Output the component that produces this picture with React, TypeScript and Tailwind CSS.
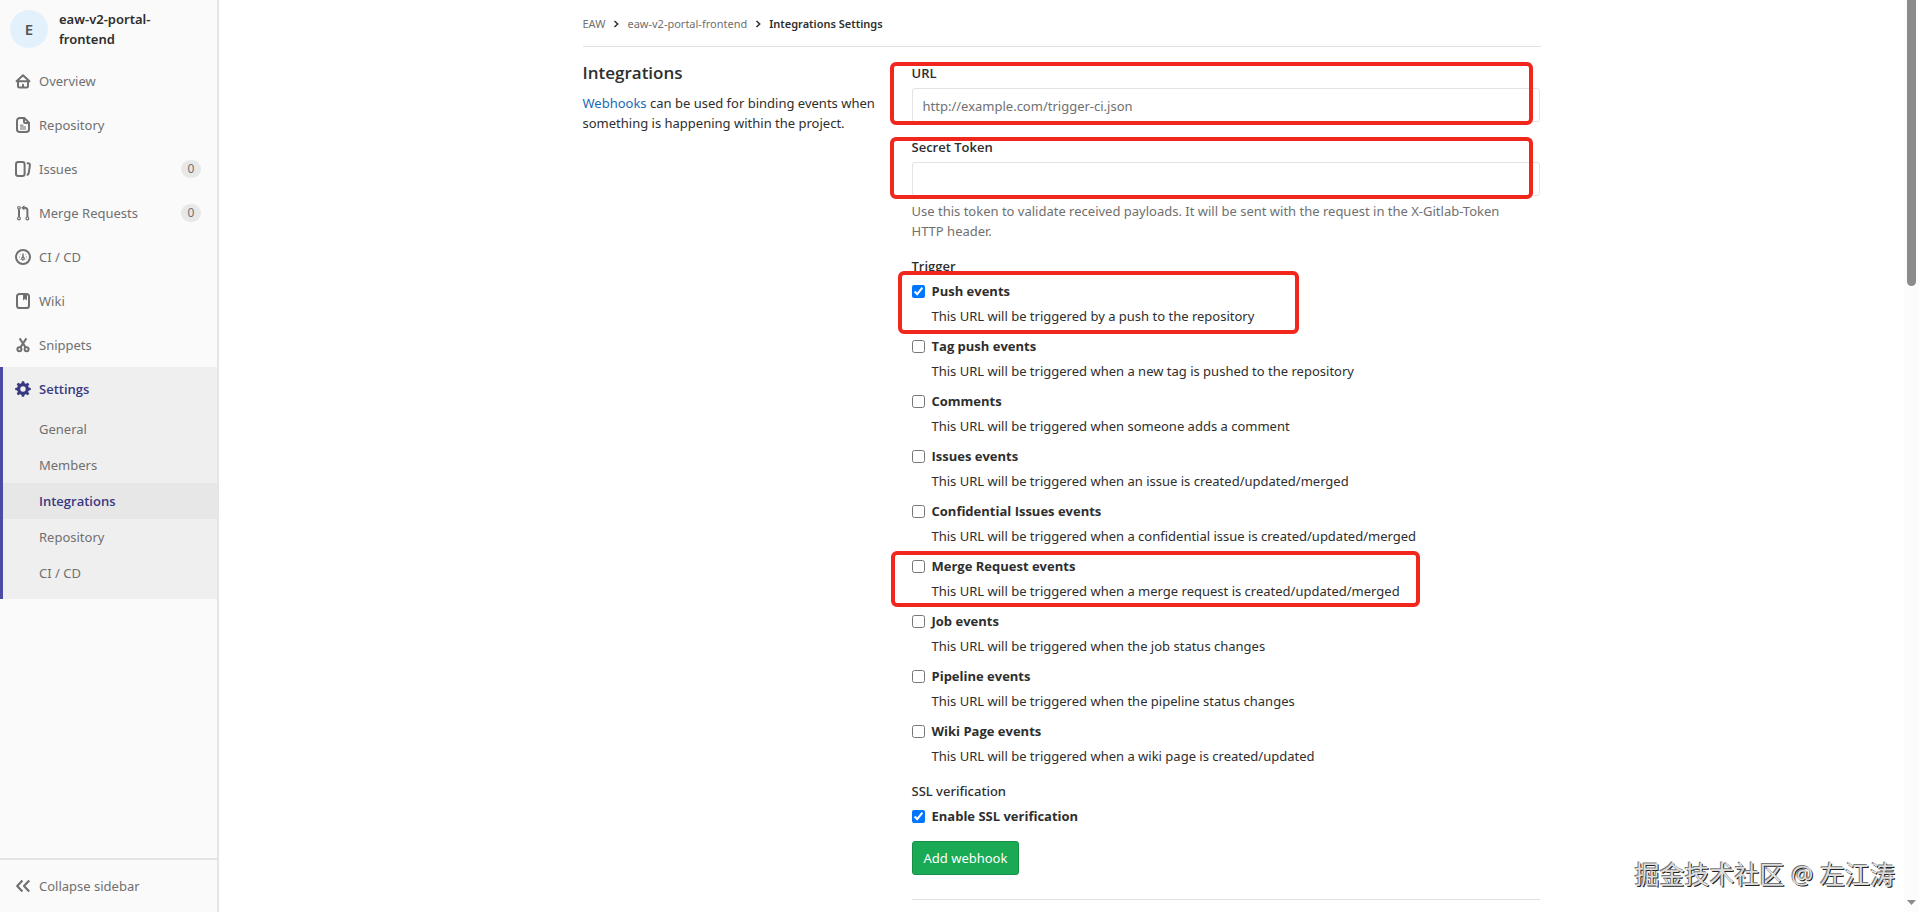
import type { ReactNode } from "react";
import clsx from "clsx";

// ─── Data ───────────────────────────────────────────────────────────────────

const NAV_ITEMS = [
  { label: "Overview", icon: "home" },
  { label: "Repository", icon: "doc" },
  { label: "Issues", icon: "issues", count: 0 },
  { label: "Merge Requests", icon: "merge", count: 0 },
  { label: "CI / CD", icon: "gauge" },
  { label: "Wiki", icon: "book" },
  { label: "Snippets", icon: "scissors" },
];

const SETTINGS_ITEMS = ["General", "Members", "Integrations", "Repository", "CI / CD"];

const TRIGGERS = [
  {
    id: "push_events",
    label: "Push events",
    help: "This URL will be triggered by a push to the repository",
    checked: true,
    mark: "-left-[14px] -top-[10px] -bottom-[8px] w-[401px]",
  },
  {
    id: "tag_push_events",
    label: "Tag push events",
    help: "This URL will be triggered when a new tag is pushed to the repository",
  },
  {
    id: "note_events",
    label: "Comments",
    help: "This URL will be triggered when someone adds a comment",
  },
  {
    id: "issues_events",
    label: "Issues events",
    help: "This URL will be triggered when an issue is created/updated/merged",
  },
  {
    id: "confidential_issues_events",
    label: "Confidential Issues events",
    help: "This URL will be triggered when a confidential issue is created/updated/merged",
  },
  {
    id: "merge_requests_events",
    label: "Merge Request events",
    help: "This URL will be triggered when a merge request is created/updated/merged",
    mark: "-left-[21px] -top-[5px] -bottom-[6px] w-[529px]",
  },
  {
    id: "job_events",
    label: "Job events",
    help: "This URL will be triggered when the job status changes",
  },
  {
    id: "pipeline_events",
    label: "Pipeline events",
    help: "This URL will be triggered when the pipeline status changes",
  },
  {
    id: "wiki_page_events",
    label: "Wiki Page events",
    help: "This URL will be triggered when a wiki page is created/updated",
  },
];

// ─── Icons ──────────────────────────────────────────────────────────────────

const ICONS: Record<string, ReactNode> = {
  home: (
    <>
      <path d="M8 2.2 14.4 8.2H1.6z" />
      <path d="M3 8.4v4.8c0 .8.5 1.3 1.3 1.3h7.4c.8 0 1.3-.5 1.3-1.3V8.4" />
      <path d="M7 14v-2.2a1 1 0 0 1 2 0V14z" fill="currentColor" stroke="none" />
    </>
  ),
  doc: (
    <>
      <path d="M9.3 1H4.8A2.8 2.8 0 0 0 2 3.8v8.4A2.8 2.8 0 0 0 4.8 15h6.4a2.8 2.8 0 0 0 2.8-2.8V5.6z" />
      <path d="M9 1.2v3.2c0 .9.6 1.5 1.5 1.5H14" />
      <path d="M5 8.2h3.4M5 10h6M5 12h6" strokeWidth="1" />
    </>
  ),
  issues: (
    <>
      <rect x="1" y="1" width="8.6" height="14" rx="2.2" />
      <path d="M11.8 2.2h1.3c1.2 0 2 .9 1.8 2.1l-1.2 8c-.2 1-.8 1.6-1.9 1.6" />
    </>
  ),
  merge: (
    <>
      <circle cx="4" cy="2.8" r="1.3" strokeWidth="1.2" />
      <circle cx="4" cy="13.4" r="1.4" strokeWidth="1.2" />
      <circle cx="12.4" cy="13.4" r="1.4" strokeWidth="1.2" />
      <path d="M4 4.2V12M12.4 12V5.4c0-1.7-.9-2.6-2.6-2.6H8.6" />
      <path d="M9.4.2v5.2L6.2 2.8z" fill="currentColor" stroke="none" />
    </>
  ),
  gauge: (
    <>
      <circle cx="8" cy="8" r="7" />
      <path d="M8 4.4 8.8 8.6H7.2z" fill="currentColor" strokeWidth=".6" />
      <circle cx="8" cy="9.6" r="1.3" strokeWidth="1.2" />
      <path
        d="M4 8h.8M11.2 8h.8M5 5.2l.5.5M11 5.2l-.5.5M5 10.8l.5-.5M11 10.8l-.5-.5"
        strokeWidth="1"
      />
    </>
  ),
  book: (
    <>
      <rect x="2" y="1" width="12" height="14" rx="2.6" />
      <path d="M8 1h4v6.4L10 6 8 7.4z" fill="currentColor" stroke="none" />
    </>
  ),
  scissors: (
    <>
      <circle cx="4.4" cy="12.2" r="2" />
      <circle cx="11.6" cy="12.2" r="2" />
      <path d="M4.6 1.4 10.6 10.4M11.4 1.4 5.4 10.4" />
    </>
  ),
  collapse: <path d="M7.4 2.6 2.2 8l5.2 5.4M14.2 2.6 9 8l5.2 5.4" strokeWidth="2.2" />,
};

function Icon({ name }: { name: string }) {
  return (
    <svg
      viewBox="0 0 16 16"
      className="size-4 shrink-0"
      fill="none"
      stroke="currentColor"
      strokeWidth="2"
      strokeLinejoin="round"
      aria-hidden="true"
    >
      {ICONS[name]}
    </svg>
  );
}

function GearIcon() {
  return (
    <svg viewBox="0 0 16 16" className="size-4 shrink-0" aria-hidden="true">
      <circle cx="8" cy="8" r="4.3" fill="none" stroke="currentColor" strokeWidth="3.2" />
      {[0, 45, 90, 135, 180, 225, 270, 315].map((angle) => (
        <path
          key={angle}
          d="M6.2 3 6.9.2h2.2L9.8 3z"
          fill="currentColor"
          transform={`rotate(${angle} 8 8)`}
        />
      ))}
    </svg>
  );
}

// ─── Sidebar ────────────────────────────────────────────────────────────────

function Sidebar() {
  return (
    <aside className="flex w-[219px] shrink-0 flex-col border-r-2 border-[#e5e5e5] bg-[#fafafa] text-[#707070]">
      <a href="#project" className="flex h-[59px] items-start gap-[11px] px-[10px] pt-[9px]">
        <span className="mt-px flex size-[38px] shrink-0 items-center justify-center rounded-full bg-[#e3f1fd] text-[15px] font-semibold text-[#555]">
          E
        </span>
        <span className="w-[120px] font-semibold text-[#2e2e2e]">eaw-v2-portal-frontend</span>
      </a>

      <nav aria-label="Project">
        <ul>
          {NAV_ITEMS.map((item) => (
            <li key={item.label}>
              <a
                href="#nav"
                className="flex h-11 items-center gap-2 border-l-3 border-transparent pr-4 pl-3"
              >
                <Icon name={item.icon} />
                {item.label}
                {item.count !== undefined && (
                  <span className="ml-auto flex h-[18px] w-5 items-center justify-center rounded-full bg-[#e8e8e8] text-xs">
                    {item.count}
                  </span>
                )}
              </a>
            </li>
          ))}
          <li className="border-l-3 border-[#4b4ba3] bg-[#efefef] pb-2">
            <a
              href="#settings"
              className="flex h-11 items-center gap-2 pl-3 font-['Open_Sans',sans-serif] font-semibold text-[#393982]"
            >
              <GearIcon />
              Settings
            </a>
            <ul>
              {SETTINGS_ITEMS.map((label) => (
                <li key={label}>
                  <a
                    href="#settings"
                    className={clsx(
                      "flex h-9 items-center pl-9",
                      label === "Integrations" &&
                        "bg-[#e7e7e7] font-['Open_Sans',sans-serif] font-semibold text-[#393982]",
                    )}
                  >
                    {label}
                  </a>
                </li>
              ))}
            </ul>
          </li>
        </ul>
      </nav>

      <button
        type="button"
        className="mt-auto flex h-[54px] items-center gap-2 border-t-2 border-[#e5e5e5] pl-[15px]"
      >
        <Icon name="collapse" />
        Collapse sidebar
      </button>
    </aside>
  );
}

// ─── Form ───────────────────────────────────────────────────────────────────

/** Red outline drawn over a part of the form */
function Highlight({ className }: { className: string }) {
  return (
    <span
      className={clsx(
        "pointer-events-none absolute rounded-md border-4 border-[#f1261c]",
        className,
      )}
    />
  );
}

function Field({
  id,
  label,
  placeholder,
  mark,
}: {
  id: string;
  label: string;
  placeholder?: string;
  mark: string;
}) {
  return (
    <div className="relative">
      <label htmlFor={id} className="mb-[5px] block font-['Open_Sans',sans-serif] font-semibold">
        {label}
      </label>
      <input
        id={id}
        type="text"
        placeholder={placeholder}
        className="block h-[34px] w-full rounded-[3px] border border-[#e3e3e3] bg-white px-[10px] pt-0.5 placeholder:text-[#707070]"
      />
      <Highlight className={mark} />
    </div>
  );
}

function CheckRow({ id, label, checked }: { id: string; label: string; checked?: boolean }) {
  return (
    <div className="flex items-center gap-[7px]">
      <input id={id} type="checkbox" defaultChecked={checked} className="size-[13px]" />
      <label htmlFor={id} className="font-['Open_Sans',sans-serif] font-bold">
        {label}
      </label>
    </div>
  );
}

function WebhookForm() {
  return (
    <form className="w-2/3 pr-[17px] pl-[15px]" onSubmit={(e) => e.preventDefault()}>
      <Field
        id="hook_url"
        label="URL"
        placeholder="http://example.com/trigger-ci.json"
        mark="-left-[22px] right-[7px] -top-px -bottom-[3px]"
      />
      <div className="mt-[15px]">
        <Field
          id="hook_token"
          label="Secret Token"
          mark="-left-[22px] right-[7px] top-0 -bottom-[3px]"
        />
      </div>
      <p className="mt-[5px] pr-4 text-[#707070]">
        Use this token to validate received payloads. It will be sent with the request in the
        X-Gitlab-Token HTTP header.
      </p>

      <fieldset className="mt-[15px]">
        <legend className="mb-[5px] font-['Open_Sans',sans-serif] font-semibold">Trigger</legend>
        <ul className="flex flex-col gap-[10px]">
          {TRIGGERS.map((trigger) => (
            <li key={trigger.id} className="relative">
              <CheckRow id={trigger.id} label={trigger.label} checked={trigger.checked} />
              <p className="mt-[5px] pl-5">{trigger.help}</p>
              {trigger.mark && <Highlight className={trigger.mark} />}
            </li>
          ))}
        </ul>
      </fieldset>

      <fieldset className="mt-[15px]">
        <legend className="mb-[5px] font-medium">SSL verification</legend>
        <CheckRow id="ssl_verification" label="Enable SSL verification" checked />
      </fieldset>

      <button
        type="submit"
        className="mt-[15px] block h-[34px] rounded-[3px] border border-[#168f48] bg-[#1aaa55] px-[11px] text-white"
      >
        Add webhook
      </button>
      <hr className="mt-6 border-[#e1e1e1]" />
    </form>
  );
}

// ─── Page ───────────────────────────────────────────────────────────────────

function Chevron() {
  return (
    <svg viewBox="0 0 8 8" className="size-2" fill="none" stroke="#2e2e2e" aria-hidden="true">
      <path d="M2.5 1 5.7 4 2.5 7" strokeWidth="1.5" />
    </svg>
  );
}

function ScrollRail() {
  return (
    <div className="flex w-[15px] shrink-0 flex-col items-center justify-between bg-[#fcfcfc] pb-[7px]">
      <div className="h-[286px] w-[9px] rounded-b-full bg-[#8b8b8b]" />
      <svg viewBox="0 0 9 5" className="h-[5px] w-[9px]" fill="#8b8b8b" aria-hidden="true">
        <path d="M0 0h9L4.5 5z" />
      </svg>
    </div>
  );
}

export default function App() {
  return (
    <div className="flex h-screen overflow-hidden bg-white font-['Noto_Sans',sans-serif] text-[13px] leading-5 text-[#2e2e2e]">
      <Sidebar />
      <main className="min-w-0 flex-1">
        <div className="mx-auto max-w-[990px] px-4">
          <nav
            aria-label="Breadcrumb"
            className="flex h-[47px] items-center gap-[7px] border-b border-[#e1e1e1] pt-0.5 text-[11px] text-[#707070]"
          >
            <a href="#group">EAW</a>
            <Chevron />
            <a href="#project">eaw-v2-portal-frontend</a>
            <Chevron />
            <a href="#integrations" className="font-semibold text-[#2e2e2e]">
              Integrations Settings
            </a>
          </nav>
          <div className="-mx-4 flex pt-4">
            <div className="w-1/3 pr-[15px] pl-4">
              <h1 className="mb-[10px] font-['Open_Sans',sans-serif] text-[17px] leading-5 font-semibold">
                Integrations
              </h1>
              <p>
                <a href="#webhooks" className="text-[#1b69b6]">
                  Webhooks
                </a>{" "}
                can be used for binding events when something is happening within the project.
              </p>
            </div>
            <WebhookForm />
          </div>
        </div>
      </main>
      <ScrollRail />
      <p className="pointer-events-none absolute right-6 bottom-5 font-['Open_Sans','Noto_Sans_CJK_SC',sans-serif] text-[25px] leading-9 text-[#dedede] [text-shadow:-1px_-1px_0_#777,1px_1px_0_#222]">
        掘金技术社区 @ 左江涛
      </p>
    </div>
  );
}
